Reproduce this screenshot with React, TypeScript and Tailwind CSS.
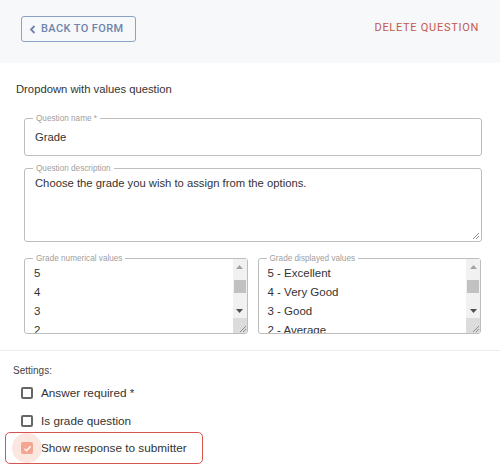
import React from "react";

function Scrollbar() {
  return (
    <div className="absolute right-0 top-0 bottom-0 w-[14px] flex flex-col">
      <div className="flex-1 bg-[#f1f1f1] flex flex-col items-center">
        <div className="h-[14px] mt-[1px] flex items-center justify-center">
          <svg width="7" height="4" viewBox="0 0 7 4"><path d="M3.5 0 L7 4 L0 4 Z" fill="#a3a3a3" /></svg>
        </div>
        <div className="w-[12px] h-[13px] bg-[#c1c1c1] mt-[6px]" />
        <div className="flex-1" />
        <div className="h-[14px] flex items-center justify-center">
          <svg width="7" height="4" viewBox="0 0 7 4"><path d="M0 0 L7 0 L3.5 4 Z" fill="#505050" /></svg>
        </div>
      </div>
      <div className="h-[15px] bg-[#dcdcdc] relative">
        <svg className="absolute right-0 bottom-0" width="10" height="10" viewBox="0 0 10 10">
          <path d="M9 3 L3 9 M9 6 L6 9" stroke="#8d8d8d" strokeWidth="1" />
        </svg>
      </div>
    </div>
  );
}

function Legend({ children }: { children: React.ReactNode }) {
  return (
    <span className="absolute left-[8px] top-[-6px] bg-white px-[3px] text-[8.2px] leading-[11px] text-[#a0a0a0] whitespace-nowrap">
      {children}
    </span>
  );
}

function ListBox({ label, items }: { label: string; items: string[] }) {
  return (
    <div className="relative h-[76px] border border-[#bdbdbd] rounded-[3px]">
      <Legend>{label}</Legend>
      <div className="absolute inset-0 overflow-hidden pl-[9px] pt-[5px] pr-[16px]">
        {items.map((t) => (
          <div key={t} className="text-[11.5px] leading-[19px] text-[#333]">{t}</div>
        ))}
      </div>
      <Scrollbar />
    </div>
  );
}

function Box({ checked }: { checked?: boolean }) {
  if (checked) {
    return (
      <div className="w-[12px] h-[12px] rounded-[2px] bg-[#f5a592] flex items-center justify-center">
        <svg width="9" height="9" viewBox="0 0 9 9"><path d="M1.5 4.8 L3.6 6.8 L7.6 2.3" stroke="#fff" strokeWidth="1.4" fill="none" /></svg>
      </div>
    );
  }
  return <div className="w-[12px] h-[12px] rounded-[2px] border-2 border-[#666]" />;
}

export default function App() {
  return (
    <div className="w-[500px] h-[471px] bg-white font-['Liberation_Sans',Arial,sans-serif] overflow-hidden">
      <div className="h-[63px] bg-[#f7f8fa] flex items-start justify-between pl-[21px] pr-[21px] font-['Roboto',sans-serif]">
        <button className="mt-[16px] h-[26px] w-[115px] border border-[#8ca1c4] rounded-[3px] flex items-center pl-[7px] gap-[5px] text-[#6d85ad] text-[11px] font-medium tracking-[0.4px]">
          <svg width="7" height="9" viewBox="0 0 7 9"><path d="M5.5 1 L2 4.5 L5.5 8" stroke="#6d85ad" strokeWidth="1.8" fill="none" /></svg>
          BACK TO FORM
        </button>
        <div className="mt-[21px] text-[11px] leading-[14px] tracking-[0.72px] text-[#c3574d]">DELETE QUESTION</div>
      </div>

      <div className="pl-[16px] pr-[18px]">
        <div className="mt-[18px] text-[11.25px] leading-[16px] text-[#333]">Dropdown with values question</div>
        <div className="pl-[8px]">
          <div className="relative mt-[21px] h-[38px] border border-[#bdbdbd] rounded-[3px] pl-[10px] pt-[9px]">
            <Legend>Question name *</Legend>
            <div className="text-[11.25px] leading-[18px] text-[#333]">Grade</div>
          </div>
          <div className="relative mt-[12px] h-[74px] border border-[#bdbdbd] rounded-[3px] pl-[10px] pt-[5px]">
            <Legend>Question description</Legend>
            <div className="text-[11.25px] leading-[18px] text-[#333]">Choose the grade you wish to assign from the options.</div>
            <svg className="absolute right-[1px] bottom-[1px]" width="9" height="9" viewBox="0 0 9 9">
              <path d="M8 2 L2 8 M8 5 L5 8" stroke="#8d8d8d" strokeWidth="1" />
            </svg>
          </div>
          <div className="mt-[16px] grid grid-cols-2 gap-[10px] pr-[1px]">
            <ListBox label="Grade numerical values" items={["5", "4", "3", "2", "1"]} />
            <ListBox label="Grade displayed values" items={["5 - Excellent", "4 - Very Good", "3 - Good", "2 - Average", "1 - Poor"]} />
          </div>
        </div>
      </div>

      <div className="mt-[16px] border-t border-[#ececec]">
        <div className="pl-[13px] mt-[13px] text-[10px] leading-[14px] text-[#444]">Settings:</div>
        <div className="pl-[21px] mt-[6px] flex items-center gap-[8px] h-[18px]">
          <Box />
          <span className="text-[11.75px] text-[#333] whitespace-nowrap">Answer required *</span>
        </div>
        <div className="pl-[21px] mt-[10px] flex items-center gap-[8px] h-[18px]">
          <Box />
          <span className="text-[11.75px] text-[#333] whitespace-nowrap">Is grade question</span>
        </div>
        <div className="ml-[5px] mt-[2px] w-[198px] h-[32px] border-[1.5px] border-[#d9534f] rounded-[5px] flex items-center pl-[15px] gap-[8px]">
          <div className="relative w-[12px] h-[12px]">
            <div className="absolute left-[-9px] top-[-9px] w-[30px] h-[30px] rounded-full bg-[#fce6e0]" />
            <div className="relative"><Box checked /></div>
          </div>
          <span className="text-[11.75px] text-[#333] whitespace-nowrap">Show response to submitter</span>
        </div>
      </div>
    </div>
  );
}
